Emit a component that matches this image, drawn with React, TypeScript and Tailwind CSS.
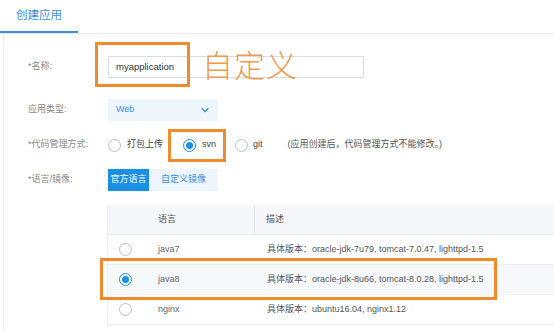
import { ChevronDown } from 'lucide-react';

const font = { fontFamily: '"Liberation Sans", "Noto Sans CJK SC", sans-serif' };

function Radio({ checked }: { checked?: boolean }) {
  return (
    <span
      className={`flex h-[13px] w-[13px] shrink-0 items-center justify-center rounded-full border ${
        checked ? 'border-[#1a8fe6]' : 'border-[#b8c0cc]'
      } bg-white`}
    >
      {checked && <span className="h-[7px] w-[7px] rounded-full bg-[#1a8fe6]" />}
    </span>
  );
}

const rows = [
  { name: 'java7', desc: '具体版本：oracle-jdk-7u79, tomcat-7.0.47, lighttpd-1.5' },
  { name: 'java8', desc: '具体版本：oracle-jdk-8u66, tomcat-8.0.28, lighttpd-1.5', checked: true },
  { name: 'nginx', desc: '具体版本：ubuntu16.04, nginx1.12' },
];

export default function App() {
  return (
    <div className="relative h-[330px] w-[554px] overflow-hidden bg-white text-[9px] text-[#555]" style={font}>
      {/* tab bar */}
      <div className="flex h-[34px] items-end border-b border-[#ececec]">
        <div className="flex h-full w-[78px] items-center justify-center border-b-2 border-[#3a8ee6] pt-[1px] text-[11.5px] text-[#3a8ee6]">
          创建应用
        </div>
      </div>

      <div className="ml-[3px] h-full border-l border-[#f0f0f0] pt-[22px]">
        {/* name */}
        <div className="flex h-[22px] items-center">
          <div className="w-[104px] pl-[24px] text-[#888]">*名称:</div>
          <div className="flex h-[22px] w-[256px] items-center border border-[#d8dce3] pl-[7px] text-[9.5px] text-[#333]">
            myapplication
          </div>
        </div>

        {/* type */}
        <div className="mt-[21px] flex h-[22px] items-center">
          <div className="w-[104px] pl-[24px] text-[#888]">应用类型:</div>
          <div className="flex h-[22px] w-[110px] items-center justify-between bg-[#edf5fd] pl-[8px] pr-[7px] text-[#3a8ee6]">
            <span>Web</span>
            <ChevronDown size={12} strokeWidth={2.5} className="text-[#3a8ee6]" />
          </div>
        </div>

        {/* scm */}
        <div className="mt-[13px] flex h-[22px] items-center">
          <div className="w-[104px] pl-[24px] text-[#888]">*代码管理方式:</div>
          <div className="flex items-center gap-[6px] text-[#444]">
            <Radio />
            <span>打包上传</span>
          </div>
          <div className="ml-[20px] flex items-center gap-[6px] text-[#444]">
            <Radio checked />
            <span>svn</span>
          </div>
          <div className="ml-[19px] flex items-center gap-[5px] text-[#444]">
            <Radio />
            <span>git</span>
          </div>
          <span className="ml-[25px] text-[#555]">(应用创建后，代码管理方式不能修改。)</span>
        </div>

        {/* language */}
        <div className="mt-[13px] flex h-[22px] items-center">
          <div className="w-[104px] pl-[24px] text-[#888]">*语言/镜像:</div>
          <div className="flex h-[22px] w-[41px] items-center justify-center bg-[#1a8fe6] text-white">官方语言</div>
          <div className="flex h-[22px] w-[69px] items-center justify-center bg-[#edf5fd] text-[#3a8ee6]">自定义镜像</div>
        </div>

        {/* table */}
        <div className="ml-[103px] mt-[14px] border-l border-[#eef0f3]">
          <div className="flex h-[30px] items-center border-b border-[#e8eaee] bg-[#f5f7fa] text-[#555]">
            <div className="flex h-full w-[147px] items-center border-r border-[#e6e8ec] pl-[50px]">语言</div>
            <div className="pl-[11px]">描述</div>
          </div>
          {rows.map((r) => (
            <div
              key={r.name}
              className={`flex h-[30px] items-center border-b border-[#eceef2] ${r.checked ? 'bg-[#f7f8fa]' : 'bg-white'}`}
            >
              <div className="flex w-[147px] items-center pl-[11px]">
                <Radio checked={r.checked} />
                <span className="ml-[26px] text-[#666]">{r.name}</span>
              </div>
              <div className="pl-[12px] text-[#555]">{r.desc}</div>
            </div>
          ))}
        </div>
      </div>

      {/* annotations */}
      <div className="absolute left-[95px] top-[42px] h-[45px] w-[95px] border-[3px] border-[#f08a2a]" />
      <div
        className="absolute left-[202px] top-[40px] text-[31px] font-light leading-[48px] tracking-[1px] text-[#f29a4e]"
        style={{ fontFamily: '"Noto Sans CJK SC", sans-serif' }}
      >
        自定义
      </div>
      <div className="absolute left-[168px] top-[129px] h-[33px] w-[58px] border-[3px] border-[#f08a2a]" />
      <div className="absolute left-[100px] top-[258px] h-[42px] w-[397px] border-[3px] border-[#f08a2a]" />
    </div>
  );
}
